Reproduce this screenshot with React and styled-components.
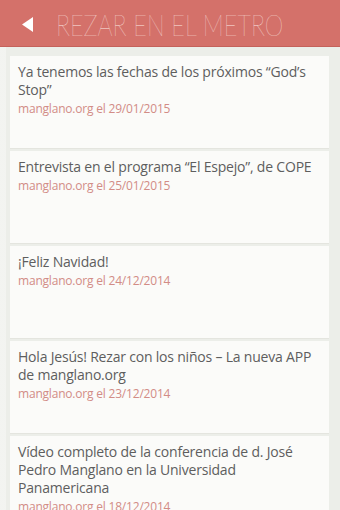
import styled, { createGlobalStyle } from "styled-components";

const GlobalStyle = createGlobalStyle`
  html, body {
    margin: 0;
    padding: 0;
    background: #eceee9;
  }
  * {
    box-sizing: border-box;
  }
`;

const posts = [
  {
    title: "Ya tenemos las fechas de los próximos “God’s Stop”",
    date: "29/01/2015",
  },
  {
    title: "Entrevista en el programa “El Espejo”, de COPE",
    date: "25/01/2015",
  },
  { title: "¡Feliz Navidad!", date: "24/12/2014" },
  {
    title: "Hola Jesús! Rezar con los niños – La nueva APP de manglano.org",
    date: "23/12/2014",
  },
  {
    title:
      "Vídeo completo de la conferencia de d. José Pedro Manglano en la Universidad Panamericana",
    date: "18/12/2014",
  },
];

export default function App() {
  return (
    <>
      <GlobalStyle />
      <Screen>
        <Header>
          <BackButton aria-label="Volver">
            <svg width="11" height="15" viewBox="0 0 11 15">
              <path d="M11 0 L0 7.5 L11 15 Z" fill="#ffffff" />
            </svg>
          </BackButton>
          <Title>Rezar en el metro</Title>
        </Header>

        <List>
          {posts.map((post) => (
            <Card key={post.date + post.title}>
              <PostTitle>{post.title}</PostTitle>
              <Meta>manglano.org el {post.date}</Meta>
            </Card>
          ))}
        </List>
      </Screen>
    </>
  );
}

const Screen = styled.div`
  width: 340px;
  height: 510px;
  overflow: hidden;
  background:
    linear-gradient(90deg, rgba(255, 255, 255, 0.35) 0 6px, transparent 6px),
    #eceee9;
`;

const Header = styled.header`
  height: 46px;
  display: flex;
  align-items: center;
  background: #d4716a;
  box-shadow: 0 1px 0 #c4625b;
  padding-left: 22px;
  overflow: hidden;
`;

const BackButton = styled.button`
  display: flex;
  align-items: center;
  flex-shrink: 0;
  border: 0;
  padding: 0;
  margin: 2px 0 0;
  background: none;
  width: 34px;
`;

// thin display face, squeezed to match the narrow caps of the original
const Title = styled.h1`
  margin: 0 0 -2px;
  font-family: Lato, "Open Sans", sans-serif;
  font-weight: 100;
  font-size: 30px;
  line-height: 30px;
  text-transform: uppercase;
  color: #fbe8e3;
  white-space: nowrap;
  transform: scaleX(0.785);
  transform-origin: left center;
`;

const List = styled.div`
  display: flex;
  flex-direction: column;
  gap: 2px;
  padding: 10px 11px 0 10px;
`;

const Card = styled.article`
  min-height: 93px;
  background: #fbfbf9;
  border-bottom: 1px solid #e4e5df;
  padding: 7px 8px 8px 8px;
`;

const PostTitle = styled.h2`
  margin: 0;
  font-family: "Open Sans", "Noto Sans", sans-serif;
  font-weight: 400;
  font-size: 14px;
  line-height: 18px;
  letter-spacing: -0.2px;
  color: #5e5e5e;
`;

const Meta = styled.div`
  font-family: "Open Sans", "Noto Sans", sans-serif;
  font-size: 12px;
  line-height: 19px;
  letter-spacing: -0.2px;
  color: #d28c86;
`;
